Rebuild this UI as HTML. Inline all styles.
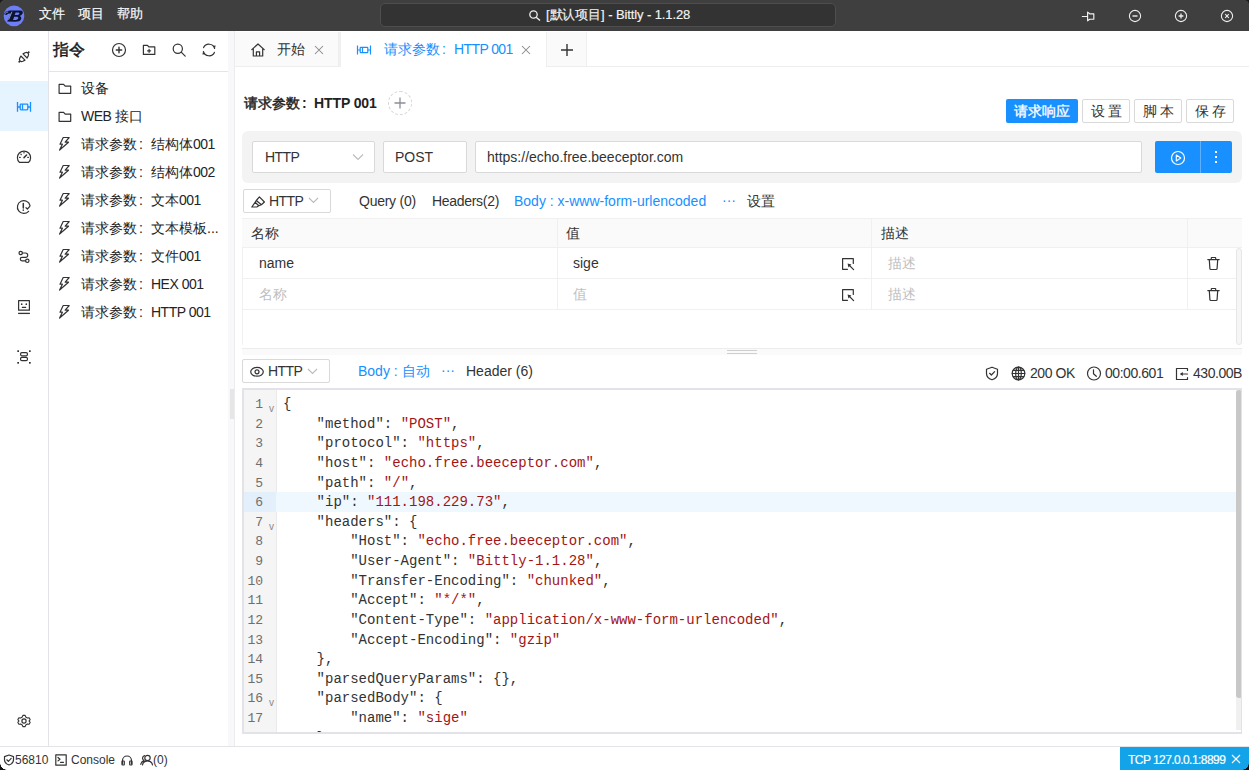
<!DOCTYPE html>
<html><head><meta charset="utf-8">
<style>
*{box-sizing:border-box;margin:0;padding:0}
html,body{width:1249px;height:770px;overflow:hidden;background:#fff;font-family:"Liberation Sans",sans-serif;color:#222;font-size:14px}
.a{position:absolute}
svg{display:block;overflow:visible}
.t{position:absolute;white-space:nowrap;line-height:1}
#title{left:0;top:0;width:1249px;height:31px;background:#3f3f3f}
.menu{color:#f8f8f8;font-size:13px;top:7px;-webkit-text-stroke:0.2px #f8f8f8}
#search{left:380px;top:3px;width:456px;height:24px;background:#333;border:1px solid #4e4e4e;border-radius:5px}
#lbar{left:0;top:31px;width:49px;height:715px;border-right:1px solid #e3e3e8;background:#fff}
#side{left:49px;top:31px;width:179px;height:715px;background:#fff}
#gut{left:228px;top:31px;width:7px;height:715px;background:#f8f8fa;border-right:1px solid #ececf0}
.item{left:81px;font-size:14px;color:#242424}
#tabs{left:235px;top:31px;width:1014px;height:36px;background:#fff;border-bottom:1px solid #eeeeee}
.tab{top:1px;height:34px;background:#fafafa;border-right:1px solid #eee}
.btn{top:99px;height:24px;border:1px solid #d9d9d9;border-radius:2px;background:#fff;font-size:14px;color:#333;text-align:center;line-height:22px}
.code{position:absolute;left:283px;font-family:"Liberation Mono",monospace;font-size:14px;color:#333;white-space:pre;line-height:19.625px}
.s{color:#a31515}
.cc{display:inline-block;width:14px;padding-left:2px}
.ln{position:absolute;left:243px;width:20px;font-family:"Liberation Mono",monospace;font-size:13px;color:#6e6e6e;text-align:right;line-height:19.625px;white-space:pre}
.ic{stroke:#333;fill:none;stroke-width:1.2;stroke-linecap:round;stroke-linejoin:round}
</style></head><body>

<!-- TITLE BAR -->
<div id="title" class="a">
  <svg class="a" style="left:0;top:0" width="31" height="31" viewBox="0 0 31 31"><circle cx="14" cy="15.9" r="10.3" fill="#6e7ef7"/><path d="M4.3 14.2 Q4.8 11 10 10.6 L20.5 10.4 Q23.6 10.8 22.6 13.6 Q21.8 15.4 19.6 15.9 Q22 16.9 21 19.4 Q19.8 21.6 15.2 21.7 L7.2 21.6 L10.8 13.6 Q8 13.2 6.6 15 Z" fill="#0b1532"/><path d="M15.6 12.4 L18.4 12.4 Q19.9 12.8 19.3 14 Q18.8 14.9 17.2 15 L14.7 15 Z M14.2 16.8 L17.3 16.8 Q18.8 17.2 18.2 18.6 Q17.6 19.8 15.8 19.9 L13 19.9 Z" fill="#6e7ef7"/><path d="M5 13.6 Q6 12 8.2 11.9 M12 11.6 L8.6 19.8" stroke="#e8ecff" stroke-width="0.6" fill="none"/></svg>
  <div class="t menu" style="left:39px">文件</div>
  <div class="t menu" style="left:78px">项目</div>
  <div class="t menu" style="left:117px">帮助</div>
  <div id="search" class="a"></div>
  <svg class="a" style="left:529px;top:10px" width="12" height="11" viewBox="0 0 12 11"><circle cx="4.5" cy="4.5" r="3.7" stroke="#eee" stroke-width="1.3" fill="none"/><path d="M7.2 7.2 L11 10.5" stroke="#eee" stroke-width="1.4"/></svg>
  <div class="t" style="left:546px;top:8px;font-size:13px;color:#f4f4f4;letter-spacing:-0.1px;-webkit-text-stroke:0.15px #f4f4f4">[默认项目] - Bittly - 1.1.28</div>
  <svg class="a" style="left:1081px;top:11px" width="14" height="11" viewBox="0 0 14 11"><path d="M0.9 5.5 H6.5 M6.6 1.1 V9.8 L8.7 8.2 H12.8 V2.8 H8.7 Z" stroke="#f2f2f2" stroke-width="1.15" fill="none" stroke-linejoin="round"/></svg>
  <svg class="a" style="left:1128px;top:9px" width="14" height="14" viewBox="0 0 14 14"><circle cx="7" cy="7" r="5.6" stroke="#eee" stroke-width="1.1" fill="none"/><path d="M4.5 7H9.5" stroke="#eee" stroke-width="1.4"/></svg>
  <svg class="a" style="left:1174px;top:9px" width="14" height="14" viewBox="0 0 14 14"><circle cx="7" cy="7" r="5.6" stroke="#eee" stroke-width="1.1" fill="none"/><path d="M4.6 7H9.4M7 4.6V9.4" stroke="#eee" stroke-width="1.3"/></svg>
  <svg class="a" style="left:1220px;top:9px" width="14" height="14" viewBox="0 0 14 14"><circle cx="7" cy="7" r="5.6" stroke="#eee" stroke-width="1.1" fill="none"/><path d="M5.2 5.2L8.8 8.8M8.8 5.2L5.2 8.8" stroke="#eee" stroke-width="1.1"/></svg>
</div>

<!-- LEFT ICON BAR -->
<div id="lbar" class="a"></div>
<div class="a" style="left:0;top:81px;width:48px;height:50px;background:#e6f4ff"></div>

<svg class="a" style="left:16px;top:49px" width="16" height="16" viewBox="0 0 16 16"><g transform="rotate(-45 8 8)" stroke="#333" fill="none" stroke-width="1.2" stroke-linejoin="round"><path d="M0.4 8 H2.4 M15.6 8 H13.6" stroke-width="1.6"/><path d="M6.5 5.1 V10.9 L4.2 10.2 Q2.4 9.6 2.4 8 Q2.4 6.4 4.2 5.8 Z"/><path d="M9.5 5.1 V10.9 L11.8 10.2 Q13.6 9.6 13.6 8 Q13.6 6.4 11.8 5.8 Z"/></g></svg>
<svg class="a" style="left:16px;top:100px" width="16" height="14" viewBox="0 0 16 14"><g stroke="#1890ff" fill="none" stroke-width="1.3"><path d="M1.5 2 V11.8 M14.5 2 V11.8 M1.5 7 H4.2 M11.8 7 H14.5 M6.5 4.2 V9.8"/><rect x="4.2" y="4.2" width="7.6" height="5.6" rx="0.8"/></g></svg>
<svg class="a" style="left:16px;top:149px" width="16" height="16" viewBox="0 0 16 16"><g class="ic" stroke-width="1.2"><path d="M3.4 13.4 A6.6 6.6 0 1 1 12.6 13.4 Z"/><path d="M8 8.6 L10.6 6" stroke-width="1.5"/><path d="M3.6 8.4 H4.2 M8 3.4 V4 M4.9 5.2 L5.3 5.6 M12.4 8.4 H11.8"/></g></svg>
<svg class="a" style="left:16px;top:199px" width="16" height="16" viewBox="0 0 16 16"><g class="ic" stroke-width="1.2"><path d="M14 6.5 A6.4 6.4 0 1 0 12.6 12.3"/><path d="M7.3 4.5 V9 M7.3 10.9 V11.2" stroke-width="1.5"/><path d="M10 8.7 L11.4 10 L13.8 7.3"/></g></svg>
<svg class="a" style="left:17px;top:249px" width="14" height="16" viewBox="0 0 14 16"><g class="ic" stroke-width="1.1"><circle cx="3.7" cy="4" r="1.7"/><circle cx="10.3" cy="11.8" r="1.7"/><path d="M5.4 4 H8.5 A2.2 2.2 0 0 1 8.5 8.4 H5 A1.7 1.7 0 0 0 5 11.8 H8.6"/></g></svg>
<svg class="a" style="left:16px;top:298px" width="16" height="17" viewBox="0 0 16 17"><g class="ic" stroke-width="1.2"><rect x="2.6" y="2.6" width="10.8" height="9.6"/><path d="M6.3 9.4 H9.7" stroke-width="1.1"/><path d="M2.1 15.4 H13.9" stroke-width="1.3" stroke-linecap="butt"/></g><circle cx="5.7" cy="6.2" r="0.85" fill="#333"/><circle cx="10.3" cy="6.2" r="0.85" fill="#333"/></svg>
<svg class="a" style="left:16px;top:349px" width="16" height="16" viewBox="0 0 16 16"><g fill="#333"><rect x="1.3" y="1.3" width="1.7" height="1.7"/><rect x="13" y="1.3" width="1.7" height="1.7"/><rect x="1.3" y="13" width="1.7" height="1.7"/><rect x="13" y="13" width="1.7" height="1.7"/></g><g class="ic" stroke-width="1.2"><rect x="4.6" y="3.6" width="6.8" height="3.2" rx="1.2"/><rect x="4.6" y="8.4" width="6.8" height="3.2" rx="1.2"/></g></svg>
<svg class="a" style="left:16px;top:713px" width="16" height="16" viewBox="0 0 16 16"><g class="ic" stroke-width="1.2"><path d="M6.7 1.6 H9.3 L10 3.4 L11.9 4.5 L13.8 4.2 L15 6.4 L13.8 7.9 V8.1 L15 9.6 L13.8 11.8 L11.9 11.5 L10 12.6 L9.3 14.4 H6.7 L6 12.6 L4.1 11.5 L2.2 11.8 L1 9.6 L2.2 8.1 V7.9 L1 6.4 L2.2 4.2 L4.1 4.5 L6 3.4 Z" transform="translate(8 8) scale(0.88) translate(-8 -8)"/><circle cx="8" cy="8" r="2.1"/></g></svg>


<!-- SIDE PANEL -->
<div id="side" class="a"></div>
<div id="gut" class="a"></div>
<div class="a" style="left:230px;top:389px;width:4px;height:30px;background:#e6e6e6"></div>

<div class="t" style="left:53px;top:42px;font-size:16px;color:#1a1a1a;-webkit-text-stroke:0.45px #1a1a1a">指令</div>
<svg class="a" style="left:111px;top:42px" width="16" height="16" viewBox="0 0 16 16"><g class="ic" stroke-width="1.2"><circle cx="8" cy="8" r="6.5"/><path d="M8 5.3 V10.7 M5.3 8 H10.7" stroke-width="1.4"/></g></svg>
<svg class="a" style="left:141px;top:42px" width="16" height="16" viewBox="0 0 16 16"><g class="ic" stroke-width="1.2"><path d="M2.4 3.3 H6.5 L7.8 4.9 H13.8 V12.4 H2.4 Z"/><path d="M8.1 7.3 V10.3 M6.6 8.8 H9.6" stroke-width="1.2"/></g></svg>
<svg class="a" style="left:171px;top:42px" width="16" height="16" viewBox="0 0 16 16"><g class="ic" stroke-width="1.3"><circle cx="6.8" cy="6.8" r="4.6"/><path d="M10.2 10.2 L14.2 14.2"/></g></svg>
<svg class="a" style="left:201px;top:42px" width="16" height="16" viewBox="0 0 16 16"><g class="ic" stroke-width="1.3"><path d="M13.6 6.5 A5.9 5.9 0 0 0 2.6 5.6"/><path d="M2.4 9.5 A5.9 5.9 0 0 0 13.4 10.4"/></g><path d="M12 3.8 L14.6 3.4 L14 6.2 Z" fill="#333"/><path d="M4 12.2 L1.4 12.6 L2 9.8 Z" fill="#333"/></svg>
<div class="a" style="left:49px;top:71px;width:179px;height:1px;background:#e4e4ea"></div>
<svg class="a" style="left:57px;top:80px" width="16" height="14" viewBox="0 0 16 14"><path class="ic" stroke-width="1.25" d="M2.1 4.4 H6.6 L8.2 6.1 H13.7 V13.3 H2.1 Z"/></svg>
<div class="t item" style="top:81px">设备</div>
<svg class="a" style="left:57px;top:108px" width="16" height="14" viewBox="0 0 16 14"><path class="ic" stroke-width="1.25" d="M2.1 4.4 H6.6 L8.2 6.1 H13.7 V13.3 H2.1 Z"/></svg>
<div class="t item" style="top:109px"><span style="letter-spacing:-0.5px">WEB</span> 接口</div>
<svg class="a" style="left:57px;top:136px" width="14" height="15" viewBox="0 0 14 15"><path class="ic" stroke-width="1.1" d="M6.2 1.5 H12.2 L8.2 6.2 H11.5 L2.6 14 L5.4 8.2 H3 Z"/></svg>
<div class="t item" style="top:137px">请求参数<span class="cc">:</span>结构体<span style="letter-spacing:-0.5px">001</span></div>
<svg class="a" style="left:57px;top:164px" width="14" height="15" viewBox="0 0 14 15"><path class="ic" stroke-width="1.1" d="M6.2 1.5 H12.2 L8.2 6.2 H11.5 L2.6 14 L5.4 8.2 H3 Z"/></svg>
<div class="t item" style="top:165px">请求参数<span class="cc">:</span>结构体<span style="letter-spacing:-0.5px">002</span></div>
<svg class="a" style="left:57px;top:192px" width="14" height="15" viewBox="0 0 14 15"><path class="ic" stroke-width="1.1" d="M6.2 1.5 H12.2 L8.2 6.2 H11.5 L2.6 14 L5.4 8.2 H3 Z"/></svg>
<div class="t item" style="top:193px">请求参数<span class="cc">:</span>文本<span style="letter-spacing:-0.5px">001</span></div>
<svg class="a" style="left:57px;top:220px" width="14" height="15" viewBox="0 0 14 15"><path class="ic" stroke-width="1.1" d="M6.2 1.5 H12.2 L8.2 6.2 H11.5 L2.6 14 L5.4 8.2 H3 Z"/></svg>
<div class="t item" style="top:221px">请求参数<span class="cc">:</span>文本模板...</div>
<svg class="a" style="left:57px;top:248px" width="14" height="15" viewBox="0 0 14 15"><path class="ic" stroke-width="1.1" d="M6.2 1.5 H12.2 L8.2 6.2 H11.5 L2.6 14 L5.4 8.2 H3 Z"/></svg>
<div class="t item" style="top:249px">请求参数<span class="cc">:</span>文件<span style="letter-spacing:-0.5px">001</span></div>
<svg class="a" style="left:57px;top:276px" width="14" height="15" viewBox="0 0 14 15"><path class="ic" stroke-width="1.1" d="M6.2 1.5 H12.2 L8.2 6.2 H11.5 L2.6 14 L5.4 8.2 H3 Z"/></svg>
<div class="t item" style="top:277px">请求参数<span class="cc">:</span><span style="letter-spacing:-0.5px">HEX 001</span></div>
<svg class="a" style="left:57px;top:304px" width="14" height="15" viewBox="0 0 14 15"><path class="ic" stroke-width="1.1" d="M6.2 1.5 H12.2 L8.2 6.2 H11.5 L2.6 14 L5.4 8.2 H3 Z"/></svg>
<div class="t item" style="top:305px">请求参数<span class="cc">:</span><span style="letter-spacing:-0.5px">HTTP 001</span></div>


<!-- TABS -->
<div id="tabs" class="a"></div>

<div class="a tab" style="left:235px;width:104px;top:32px"></div>
<svg class="a" style="left:250px;top:42px" width="16" height="16" viewBox="0 0 16 16"><g class="ic" stroke-width="1.3"><path d="M1.8 7.6 L8 2 L14.2 7.6 M3.3 6.4 V14 H12.7 V6.4 M6.4 14 V9.8 H9.6 V14"/></g></svg>
<div class="t" style="left:277px;top:42px;font-size:14px;color:#333">开始</div>
<svg class="a" style="left:313px;top:44px" width="12" height="12" viewBox="0 0 12 12"><path d="M2 2 L10 10 M10 2 L2 10" stroke="#888" stroke-width="1.05"/></svg>
<div class="a" style="left:339px;top:32px;width:2px;height:35px;background:#f0f0f0"></div>
<div class="a" style="left:341px;top:32px;width:205px;height:35px;background:#fff"></div>
<svg class="a" style="left:356px;top:43px" width="16" height="14" viewBox="0 0 16 14"><g stroke="#1890ff" fill="none" stroke-width="1.2"><path d="M1.5 2.5 V11.5 M14.5 2.5 V11.5 M1.5 7 H4.2 M11.8 7 H14.5 M6.5 4.4 V9.6"/><rect x="4.2" y="4.4" width="7.6" height="5.2" rx="0.6"/></g></svg>
<div class="t" style="left:384px;top:42px;font-size:14px;color:#1890ff">请求参数<span class="cc">:</span><span style="letter-spacing:-0.6px">HTTP 001</span></div>
<svg class="a" style="left:520px;top:44px" width="12" height="12" viewBox="0 0 12 12"><path d="M2 2 L10 10 M10 2 L2 10" stroke="#888" stroke-width="1.05"/></svg>
<div class="a" style="left:546px;top:32px;width:1px;height:35px;background:#eee"></div>
<div class="a tab" style="left:547px;width:40px;top:32px"></div>
<svg class="a" style="left:560px;top:43px" width="14" height="14" viewBox="0 0 14 14"><path d="M7 1 V13 M1 7 H13" stroke="#333" stroke-width="1.4"/></svg>



<div class="t" style="left:244px;top:96px;font-size:14px;color:#222"><span style="-webkit-text-stroke:0.45px #222">请求参数</span><span class="cc" style="font-weight:bold">:</span><span style="font-weight:bold;letter-spacing:-0.1px">HTTP 001</span></div>
<div class="a" style="left:388px;top:91px;width:24px;height:24px;border:1px dashed #d5d5d5;border-radius:50%"></div>
<svg class="a" style="left:394px;top:97px" width="12" height="12" viewBox="0 0 12 12"><path d="M6 0.5 V11.5 M0.5 6 H11.5" stroke="#8c8f99" stroke-width="1.3"/></svg>

<div class="a" style="left:1006px;top:99px;width:72px;height:24px;background:#1890ff;border-radius:2px"></div>
<div class="t" style="left:1014px;top:104px;font-size:14px;color:#fff;-webkit-text-stroke:0.3px #fff">请求响应</div>
<div class="a btn" style="left:1082px;width:48px"></div><div class="t" style="left:1091px;top:104px;font-size:14px;color:#333;letter-spacing:3px">设置</div>
<div class="a btn" style="left:1134px;width:48px"></div><div class="t" style="left:1143px;top:104px;font-size:14px;color:#333;letter-spacing:3px">脚本</div>
<div class="a btn" style="left:1186px;width:48px"></div><div class="t" style="left:1195px;top:104px;font-size:14px;color:#333;letter-spacing:3px">保存</div>

<div class="a" style="left:242px;top:131px;width:1000px;height:52px;background:#f3f3f3;border-radius:6px"></div>
<div class="a" style="left:252px;top:141px;width:123px;height:32px;background:#fff;border:1px solid #d9d9d9;border-radius:2px"></div>
<div class="t" style="left:265px;top:150px;font-size:14px;color:#333;letter-spacing:-0.6px">HTTP</div>
<svg class="a" style="left:352px;top:153px" width="12" height="8" viewBox="0 0 12 8"><path d="M1 1.5 L6 6.5 L11 1.5" stroke="#bbb" stroke-width="1.1" fill="none"/></svg>
<div class="a" style="left:383px;top:141px;width:84px;height:32px;background:#fff;border:1px solid #d9d9d9;border-radius:2px"></div>
<div class="t" style="left:395px;top:150px;font-size:14px;color:#333">POST</div>
<div class="a" style="left:475px;top:141px;width:667px;height:32px;background:#fff;border:1px solid #d9d9d9;border-radius:2px"></div>
<div class="t" style="left:487px;top:150px;font-size:14px;color:#333">https://echo.free.beeceptor.com</div>
<div class="a" style="left:1155px;top:141px;width:77px;height:32px;background:#1890ff;border-radius:2px"></div>
<div class="a" style="left:1200px;top:141px;width:1px;height:32px;background:#5fb1ff"></div>
<svg class="a" style="left:1170px;top:150px" width="16" height="16" viewBox="0 0 16 16"><circle cx="8" cy="8" r="6.5" stroke="#fff" stroke-width="1.2" fill="none"/><path d="M6.3 5 V11 L10.8 8 Z" stroke="#fff" stroke-width="1.1" fill="none" stroke-linejoin="round"/></svg>
<div class="a" style="left:1215px;top:151px;width:2px;height:2px;background:#fff"></div>
<div class="a" style="left:1215px;top:156px;width:2px;height:2px;background:#fff"></div>
<div class="a" style="left:1215px;top:161px;width:2px;height:2px;background:#fff"></div>

<div class="a" style="left:243px;top:189px;width:88px;height:24px;border:1px solid #d9d9d9;border-radius:2px"></div>
<svg class="a" style="left:250px;top:194px" width="16" height="14" viewBox="0 0 16 14"><g class="ic" stroke-width="1.15"><path d="M9.4 2.9 L14.4 8 L11.4 10.7 L6.3 6.5 Z M6.3 6.5 L5.1 8.3 L8.8 11.8 L11.4 10.7 M5.1 8.3 L1.8 13 H6.8 L8.8 11.8"/></g></svg>
<div class="t" style="left:269px;top:194px;font-size:14px;color:#333;letter-spacing:-0.6px">HTTP</div>
<svg class="a" style="left:308px;top:197px" width="11" height="7" viewBox="0 0 11 7"><path d="M1 1 L5.5 5.5 L10 1" stroke="#bbb" stroke-width="1.1" fill="none"/></svg>
<div class="t" style="left:359px;top:194px;font-size:14px;color:#333;letter-spacing:-0.25px">Query (0)</div>
<div class="t" style="left:432px;top:194px;font-size:14px;color:#333;letter-spacing:-0.3px">Headers(2)</div>
<div class="t" style="left:514px;top:194px;font-size:14px;color:#1890ff">Body : x-www-form-urlencoded</div>
<div class="t" style="left:722px;top:193px;font-size:14px;color:#1890ff">···</div>
<div class="t" style="left:747px;top:194px;font-size:14px;color:#333">设置</div>

<!-- TABLE -->
<div class="a" style="left:242px;top:218px;width:1000px;height:127px;border-left:1px solid #f0f0f0"></div>
<div class="a" style="left:242px;top:218px;width:1000px;height:30px;background:#fafafa;border-top:1px solid #f0f0f0;border-bottom:1px solid #f0f0f0"></div>
<div class="a" style="left:242px;top:278px;width:1000px;height:1px;background:#f0f0f0"></div>
<div class="a" style="left:242px;top:309px;width:1000px;height:1px;background:#f0f0f0"></div>
<div class="a" style="left:557px;top:218px;width:1px;height:92px;background:#f0f0f0"></div>
<div class="a" style="left:871px;top:218px;width:1px;height:92px;background:#f0f0f0"></div>
<div class="a" style="left:1187px;top:218px;width:1px;height:92px;background:#f0f0f0"></div>
<div class="a" style="left:1236px;top:248px;width:6px;height:97px;background:#f6f6f6;border:1px solid #e6e6e6;border-radius:3px"></div>
<div class="t" style="left:251px;top:226px;font-size:14px;color:#333">名称</div>
<div class="t" style="left:566px;top:226px;font-size:14px;color:#333">值</div>
<div class="t" style="left:881px;top:226px;font-size:14px;color:#333">描述</div>
<div class="t" style="left:259px;top:256px;font-size:14px;color:#333">name</div>
<div class="t" style="left:573px;top:256px;font-size:14px;color:#333">sige</div>
<div class="t" style="left:888px;top:256px;font-size:14px;color:#bfbfbf">描述</div>
<div class="t" style="left:259px;top:287px;font-size:14px;color:#bfbfbf">名称</div>
<div class="t" style="left:573px;top:287px;font-size:14px;color:#bfbfbf">值</div>
<div class="t" style="left:888px;top:287px;font-size:14px;color:#bfbfbf">描述</div>
<svg class="a" style="left:841px;top:257px" width="15" height="15" viewBox="0 0 15 15"><g class="ic" stroke-width="1.3" stroke-linecap="butt" stroke-linejoin="miter"><path d="M12.3 6.5 V1.6 H1.6 V12.3 H6.5"/><path d="M8 8 L12.6 12.6"/></g><path d="M6.6 6.6 L10.4 7.4 L7.4 10.4 Z" fill="#333"/></svg><svg class="a" style="left:1206px;top:256px" width="15" height="15" viewBox="0 0 15 15"><g class="ic" stroke-width="1.2"><path d="M1.8 3.6 H13.2 M5.3 3.6 V2 Q5.3 1.5 5.8 1.5 H9.2 Q9.7 1.5 9.7 2 V3.6 M3.3 3.6 L3.9 12.6 Q4 13.5 4.9 13.5 H10.1 Q11 13.5 11.1 12.6 L11.7 3.6"/></g></svg>
<svg class="a" style="left:841px;top:288px" width="15" height="15" viewBox="0 0 15 15"><g class="ic" stroke-width="1.3" stroke-linecap="butt" stroke-linejoin="miter"><path d="M12.3 6.5 V1.6 H1.6 V12.3 H6.5"/><path d="M8 8 L12.6 12.6"/></g><path d="M6.6 6.6 L10.4 7.4 L7.4 10.4 Z" fill="#333"/></svg><svg class="a" style="left:1206px;top:287px" width="15" height="15" viewBox="0 0 15 15"><g class="ic" stroke-width="1.2"><path d="M1.8 3.6 H13.2 M5.3 3.6 V2 Q5.3 1.5 5.8 1.5 H9.2 Q9.7 1.5 9.7 2 V3.6 M3.3 3.6 L3.9 12.6 Q4 13.5 4.9 13.5 H10.1 Q11 13.5 11.1 12.6 L11.7 3.6"/></g></svg>


<!-- SPLITTER -->
<div class="a" style="left:242px;top:348px;width:1000px;height:1px;background:#ececec"></div>
<div class="a" style="left:242px;top:349px;width:1000px;height:6px;background:#fafafa"></div>
<div class="a" style="left:727px;top:350px;width:30px;height:1px;background:#cfcfcf"></div>
<div class="a" style="left:727px;top:353px;width:30px;height:1px;background:#cfcfcf"></div>

<!-- RESPONSE BAR -->
<div class="a" style="left:242px;top:359px;width:88px;height:24px;border:1px solid #d9d9d9;border-radius:2px"></div>
<svg class="a" style="left:250px;top:365px" width="14" height="14" viewBox="0 0 14 14"><g class="ic" stroke-width="1.15"><ellipse cx="7" cy="6.8" rx="6.3" ry="4.4"/><circle cx="7" cy="6.8" r="2"/></g></svg>
<div class="t" style="left:268px;top:364px;font-size:14px;color:#333;letter-spacing:-0.6px">HTTP</div>
<svg class="a" style="left:307px;top:368px" width="11" height="7" viewBox="0 0 11 7"><path d="M1 1 L5.5 5.5 L10 1" stroke="#bbb" stroke-width="1.1" fill="none"/></svg>
<div class="t" style="left:358px;top:364px;font-size:14px;color:#1890ff">Body : 自动</div>
<div class="t" style="left:441px;top:363px;font-size:14px;color:#1890ff">···</div>
<div class="t" style="left:466px;top:364px;font-size:14px;color:#333">Header (6)</div>

<svg class="a" style="left:985px;top:366px" width="14" height="15" viewBox="0 0 14 15"><g class="ic" stroke-width="1.2"><path d="M7 1.2 L12.5 3.2 V7.5 C12.5 10.5 10 12.8 7 13.8 C4 12.8 1.5 10.5 1.5 7.5 V3.2 Z"/><path d="M4.6 7.3 L6.4 9 L9.6 5.6"/></g></svg>
<svg class="a" style="left:1011px;top:366px" width="15" height="15" viewBox="0 0 15 15"><g class="ic" stroke-width="1.1"><circle cx="7.5" cy="7.5" r="6.3"/><ellipse cx="7.5" cy="7.5" rx="2.8" ry="6.3"/><path d="M1.2 7.5 H13.8 M2.2 4.3 H12.8 M2.2 10.7 H12.8 M7.5 1.2 V13.8"/></g></svg>
<div class="t" style="left:1030px;top:366px;font-size:14px;color:#333;letter-spacing:-0.45px">200 OK</div>
<svg class="a" style="left:1086px;top:366px" width="16" height="15" viewBox="0 0 16 15"><g class="ic" stroke-width="1.2"><circle cx="8" cy="7.5" r="6.5"/><path d="M7.5 3.8 V7.8 L10.3 10.3"/></g></svg>
<div class="t" style="left:1105px;top:366px;font-size:14px;color:#333;letter-spacing:-0.45px">00:00.601</div>
<svg class="a" style="left:1175px;top:367px" width="14" height="14" viewBox="0 0 14 14"><g class="ic" stroke-width="1.2" stroke-linecap="butt"><path d="M12.5 3.5 V1.5 H1.5 V12.5 H12.5 V10.5 M12.5 7 H6"/></g><path d="M5 7 L7.8 5 V9 Z" fill="#333"/></svg>
<div class="t" style="left:1193px;top:366px;font-size:14px;color:#333;letter-spacing:-0.45px">430.00B</div>



<!-- EDITOR -->
<div class="a" style="left:242px;top:388px;width:1000px;height:346px;border:1px solid #e2e2e8;border-top-width:2px;border-bottom-width:2px;border-left-width:2px;overflow:hidden">
  <div class="a" style="left:0;top:0;width:33px;height:346px;background:#f5f5f5;border-right:1px solid #eaeaea"></div>
  <div class="a" style="left:0;top:102px;width:998px;height:20px;background:#f0f8ff"></div>
  <div class="a" style="left:0;top:102px;width:32px;height:20px;background:#e3effb"></div>
  <div class="a" style="left:992px;top:0;width:6px;height:340px;background:#f0f0f0"></div>
  <div class="a" style="left:992px;top:0;width:6px;height:308px;background:#c8c8c8;border-radius:3px"></div>
</div>
<div class="a" style="left:243px;top:390px;width:998px;height:342px;overflow:hidden">
<div class="ln" style="left:0;top:5px">1
2
3
4
5
6
7
8
9
10
11
12
13
14
15
16
17
18</div>
<div class="a" style="left:26px;top:9px;font-family:'Liberation Sans',sans-serif;font-size:10px;color:#888;line-height:19.625px;white-space:pre">v





v








v</div>
<div class="code" style="left:40px;top:5px">{
    "method": <span class="s">"POST"</span>,
    "protocol": <span class="s">"https"</span>,
    "host": <span class="s">"echo.free.beeceptor.com"</span>,
    "path": <span class="s">"/"</span>,
    "ip": <span class="s">"111.198.229.73"</span>,
    "headers": {
        "Host": <span class="s">"echo.free.beeceptor.com"</span>,
        "User-Agent": <span class="s">"Bittly-1.1.28"</span>,
        "Transfer-Encoding": <span class="s">"chunked"</span>,
        "Accept": <span class="s">"*/*"</span>,
        "Content-Type": <span class="s">"application/x-www-form-urlencoded"</span>,
        "Accept-Encoding": <span class="s">"gzip"</span>
    },
    "parsedQueryParams": {},
    "parsedBody": {
        "name": <span class="s">"sige"</span>
    }
</div>
</div>

<!-- STATUS BAR -->
<div class="a" style="left:0;top:746px;width:1249px;height:1px;background:#e3e3e8"></div>
<svg class="a" style="left:3px;top:754px" width="12" height="12" viewBox="0 0 12 12"><g class="ic" stroke-width="1"><path d="M6 1 L10.5 2.6 V6 C10.5 8.4 8.5 10.2 6 11 C3.5 10.2 1.5 8.4 1.5 6 V2.6 Z"/><path d="M3.8 5.8 L5.4 7.3 L8.2 4.4"/></g></svg>
<div class="t" style="left:15px;top:754px;font-size:12px;color:#333">56810</div>
<svg class="a" style="left:55px;top:754px" width="12" height="12" viewBox="0 0 12 12"><g class="ic" stroke-width="1"><rect x="0.8" y="0.8" width="10.4" height="10.4"/><path d="M3 3.5 L5 5.2 L3 6.9 M5.5 8.3 H8.5"/></g></svg>
<div class="t" style="left:71px;top:754px;font-size:12px;color:#333">Console</div>
<svg class="a" style="left:121px;top:754px" width="12" height="12" viewBox="0 0 12 12"><g class="ic" stroke-width="1.2"><path d="M1.5 10 V6.5 A4.5 4.5 0 0 1 10.5 6.5 V10"/><rect x="1" y="7" width="2.3" height="4" rx="0.5"/><rect x="8.7" y="7" width="2.3" height="4" rx="0.5"/></g></svg>
<svg class="a" style="left:140px;top:754px" width="13" height="12" viewBox="0 0 13 12"><g class="ic" stroke-width="1"><circle cx="7.5" cy="4" r="2.7"/><path d="M2.5 11 C3 8 5 6.8 7.5 6.8 C10 6.8 12 8 12.5 11 M4.6 1.6 A2.7 2.7 0 0 0 4 6.6 M0.8 10.5 C1.2 8.5 2.2 7.4 3.6 6.9"/></g></svg>
<div class="t" style="left:153px;top:754px;font-size:12px;color:#333">(0)</div>
<div class="a" style="left:1120px;top:747px;width:129px;height:23px;background:#13a3e8"></div>
<div class="t" style="left:1128px;top:754px;font-size:12px;color:#fff;letter-spacing:-0.55px;-webkit-text-stroke:0.2px #fff">TCP 127.0.0.1:8899</div>
<svg class="a" style="left:1231px;top:754px" width="10" height="10" viewBox="0 0 10 10"><path d="M1 1 L9 9 M9 1 L1 9" stroke="#fff" stroke-width="1.1"/></svg>
<div class="a" style="left:0;top:0;width:4px;height:4px;background:radial-gradient(circle at 4px 4px, transparent 3.5px, #1a1a1a 4px)"></div>
<div class="a" style="left:1245px;top:0;width:4px;height:4px;background:radial-gradient(circle at 0 4px, transparent 3.5px, #1a1a1a 4px)"></div>
<div class="a" style="left:0;top:763px;width:7px;height:7px;background:radial-gradient(circle at 7px 0, transparent 6.5px, #111 7px)"></div>
<div class="a" style="left:1242px;top:763px;width:7px;height:7px;background:radial-gradient(circle at 0 0, transparent 6.5px, #111 7px)"></div>

</body></html>
